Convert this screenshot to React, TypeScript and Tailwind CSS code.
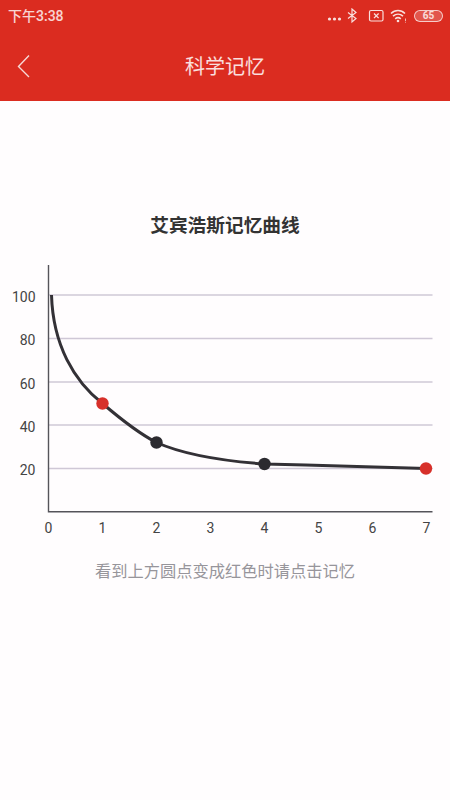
const cjk = "font-['Roboto','Noto_Sans_CJK_SC',sans-serif]";

function StatusIcons() {
  return (
    <svg width="114" height="16" viewBox="0 0 114 16" fill="none" className="opacity-85">
      <circle cx="36.5" cy="11" r="1.6" fill="#fff" />
      <circle cx="41.5" cy="11" r="1.6" fill="#fff" />
      <circle cx="46.5" cy="11" r="1.6" fill="#fff" />
      <path d="M55 4.5L63 10.5L59 14V1L63 4.5L55 10.5" stroke="#fff" strokeWidth="1.2" />
      <rect x="76.5" y="2.5" width="13.5" height="10.5" rx="1.5" stroke="#fff" strokeWidth="1.2" />
      <path d="M81 5.5l4.6 4.6m0-4.6l-4.6 4.6" stroke="#fff" strokeWidth="1.3" />
      <path d="M98 5.5C102 1.5 108 1.5 112 5.5 M100 8.2C103 5.5 107 5.5 110 8.2 M102.2 10.8C104 9.3 106 9.3 107.8 10.8" stroke="#fff" strokeWidth="1.6" />
      <circle cx="105" cy="13" r="1.3" fill="#fff" />
      <path d="M112.5 10.5V13 M112.5 13.8V14.6" stroke="#fff" strokeWidth="0.8" />
    </svg>
  );
}

function Chart() {
  const grid = [295, 338.5, 382, 425, 468.5];
  const yLabels = ["100", "80", "60", "40", "20"];
  const xLabels = ["0", "1", "2", "3", "4", "5", "6", "7"];
  return (
    <svg width="450" height="290" viewBox="0 250 450 290" className="block">
      {grid.map((y) => (
        <line key={y} x1="49" x2="432.5" y1={y} y2={y} stroke="#cfc8d6" strokeWidth="1.3" />
      ))}
      <path d="M48.5 265V511.7H432.5" fill="none" stroke="#55545a" strokeWidth="1.4" />
      <path
        d="M51.5 295C53 345 74 381 102.5 403.5C120 418.5 138 433 156.5 442.5C188 456.5 230 461.5 264.5 464C320 465.5 380 467 426 468.5"
        fill="none"
        stroke="#333136"
        strokeWidth="3"
      />
      <circle cx="102.5" cy="403.5" r="6.2" fill="#d7302a" />
      <circle cx="156.5" cy="442.5" r="6.2" fill="#2c2b30" />
      <circle cx="264.5" cy="464" r="6.2" fill="#2c2b30" />
      <circle cx="426" cy="468.5" r="6.2" fill="#d7302a" />
      {yLabels.map((t, i) => (
        <text key={t} x="35.5" y={grid[i] + 6.5} textAnchor="end" fontSize="14" fill="#444" fontFamily="Roboto, sans-serif">
          {t}
        </text>
      ))}
      {xLabels.map((t, i) => (
        <text key={t} x={48.5 + i * 54} y="532.5" textAnchor="middle" fontSize="14" fill="#444" fontFamily="Roboto, sans-serif">
          {t}
        </text>
      ))}
    </svg>
  );
}

export default function App() {
  return (
    <div className={`${cjk} w-[450px] h-[800px] bg-[#fffdfe] flex flex-col overflow-hidden`}>
      <header className="h-[101px] bg-[#db2c20] flex flex-col text-white">
        <div className="h-[32px] flex items-center justify-between pl-[8px] pr-[7px]">
          <span className="text-[14px] font-medium text-white/80">下午3:38</span>
          <div className="flex items-center gap-[7px]">
            <StatusIcons />
            <span className="w-[29px] h-[12px] rounded-full border border-white/70 flex items-center justify-center text-[10px] font-bold leading-none text-white/80 bg-white/20">65</span>
          </div>
        </div>
        <div className="h-[69px] relative flex items-center justify-center">
          <svg className="absolute left-[16px] top-[22px]" width="15" height="24" viewBox="0 0 15 24" fill="none">
            <path d="M13 1.5L2.5 12.5L13 23" stroke="#f7d9d6" strokeWidth="1.4" />
          </svg>
          <span className="text-[20px] text-white/85">科学记忆</span>
        </div>
      </header>
      <h1 className="mt-[113px] h-[24px] leading-[24px] text-center text-[18.7px] font-semibold text-[#333]">艾宾浩斯记忆曲线</h1>
      <div className="mt-[12px]">
        <Chart />
      </div>
      <p className="mt-[21px] text-center text-[16.25px] leading-[22px] text-[#97959b]">看到上方圆点变成红色时请点击记忆</p>
    </div>
  );
}
